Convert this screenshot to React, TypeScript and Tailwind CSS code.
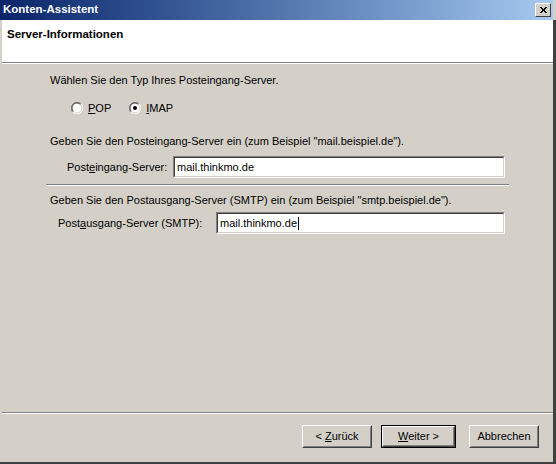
const font = { fontFamily: '"Liberation Sans", Arial, sans-serif' };

function Radio({ checked }: { checked?: boolean }) {
  return (
    <svg width="12" height="12" viewBox="0 0 12 12" className="shrink-0">
      <circle cx="6" cy="6" r="6" fill="#ffffff" />
      <path d="M10.24 1.76 A6 6 0 0 0 1.76 10.24" fill="none" stroke="#808080" strokeWidth="1" />
      <path d="M9.54 2.46 A5 5 0 0 0 2.46 9.54" fill="none" stroke="#404040" strokeWidth="1" />
      <path d="M1.76 10.24 A6 6 0 0 0 10.24 1.76" fill="none" stroke="#ffffff" strokeWidth="1" />
      <path d="M2.46 9.54 A5 5 0 0 0 9.54 2.46" fill="none" stroke="#d4d0c8" strokeWidth="1" />
      {checked && <circle cx="6" cy="6" r="2" fill="#000000" />}
    </svg>
  );
}

function Field({ value, width, caret }: { value: string; width: number; caret?: boolean }) {
  return (
    <div
      className="h-[22px] shrink-0 border border-t-[#808080] border-l-[#808080] border-b-white border-r-white"
      style={{ width }}
    >
      <div className="flex h-full items-center border border-t-[#404040] border-l-[#404040] border-b-[#d4d0c8] border-r-[#d4d0c8] bg-white pl-[2px] text-[11px] leading-[13px] text-black">
        {value}
        {caret && <span className="ml-[1px] inline-block h-[13px] w-px bg-black" />}
      </div>
    </div>
  );
}

function Button({ children, width, primary }: { children: React.ReactNode; width: number; primary?: boolean }) {
  return (
    <div className={primary ? "h-[23px] shrink-0 border border-black" : "h-[23px] shrink-0"} style={{ width }}>
      <div className="h-full border border-t-white border-l-white border-b-[#404040] border-r-[#404040]">
        <div className="flex h-full items-center justify-center border border-t-[#d4d0c8] border-l-[#d4d0c8] border-b-[#808080] border-r-[#808080] text-[11px] text-black">
          <span className="whitespace-pre">{children}</span>
        </div>
      </div>
    </div>
  );
}

export default function App() {
  return (
    <div className="flex h-[464px] w-[556px] flex-col bg-[#d4d0c8] text-black" style={font}>
      <div className="mr-[3px] flex h-[20px] items-center justify-between bg-gradient-to-r from-[#0a246a] to-[#a6caf0] pl-[3px] pr-[2px]">
        <span className="text-[11.5px] font-bold text-white">Konten-Assistent</span>
        <div className="h-[14px] w-[16px] border border-t-white border-l-white border-b-[#404040] border-r-[#404040] bg-[#d4d0c8]">
          <svg width="14" height="12" viewBox="0 0 14 12">
            <path d="M4 3 L10 9 M5 3 L11 9 M10 3 L4 9 M11 3 L5 9" stroke="#000" strokeWidth="1" />
          </svg>
        </div>
      </div>
      <div className="flex flex-1 flex-col border-r-[3px] border-b-[2px] border-r-[#404040] border-b-[#404040] pl-[2px]">
        <div className="h-[42px] bg-white pl-[5px] pt-[8px] text-[11.5px] font-bold leading-[13px]">Server-Informationen</div>
        <div className="h-px bg-[#808080]" />
        <div className="h-px bg-white" />
        <div className="flex flex-1 flex-col whitespace-nowrap pl-[48px] text-[11px] leading-[13px]">
          <div className="mt-[10px]">Wählen Sie den Typ Ihres Posteingang-Server.</div>
          <div className="mt-[15px] flex h-[12px] items-center pl-[21px]">
            <Radio />
            <span className="ml-[5px]"><u>P</u>OP</span>
            <span className="ml-[18px] flex"><Radio checked /></span>
            <span className="ml-[5px]"><u>I</u>MAP</span>
          </div>
          <div className="mt-[21px]">Geben Sie den Posteingang-Server ein (zum Beispiel "mail.beispiel.de").</div>
          <div className="mt-[8px] flex items-center">
            <span className="w-[123px] shrink-0 pl-[17px]">Post<u>e</u>ingang-Server:</span>
            <Field value="mail.thinkmo.de" width={332} />
          </div>
          <div className="mt-[6px] -ml-[4px] w-[463px]">
            <div className="h-px bg-[#808080]" />
            <div className="h-px bg-white" />
          </div>
          <div className="mt-[8px]">Geben Sie den Postausgang-Server (SMTP) ein (zum Beispiel "smtp.beispiel.de").</div>
          <div className="mt-[5px] flex items-center">
            <span className="w-[166px] shrink-0 pl-[8px]">Post<u>a</u>usgang-Server (SMTP):</span>
            <Field value="mail.thinkmo.de" width={289} caret />
          </div>
        </div>
        <div className="h-px bg-[#808080]" />
        <div className="h-px bg-white" />
        <div className="flex h-[48px] items-start justify-end pr-[14px] pt-[11px]">
          <Button width={70}>&lt; <u>Z</u>urück</Button>
          <span className="ml-[9px]">
            <Button width={75} primary><u>W</u>eiter &gt;</Button>
          </span>
          <span className="ml-[13px]">
            <Button width={70}>Abbrechen</Button>
          </span>
        </div>
      </div>
    </div>
  );
}
